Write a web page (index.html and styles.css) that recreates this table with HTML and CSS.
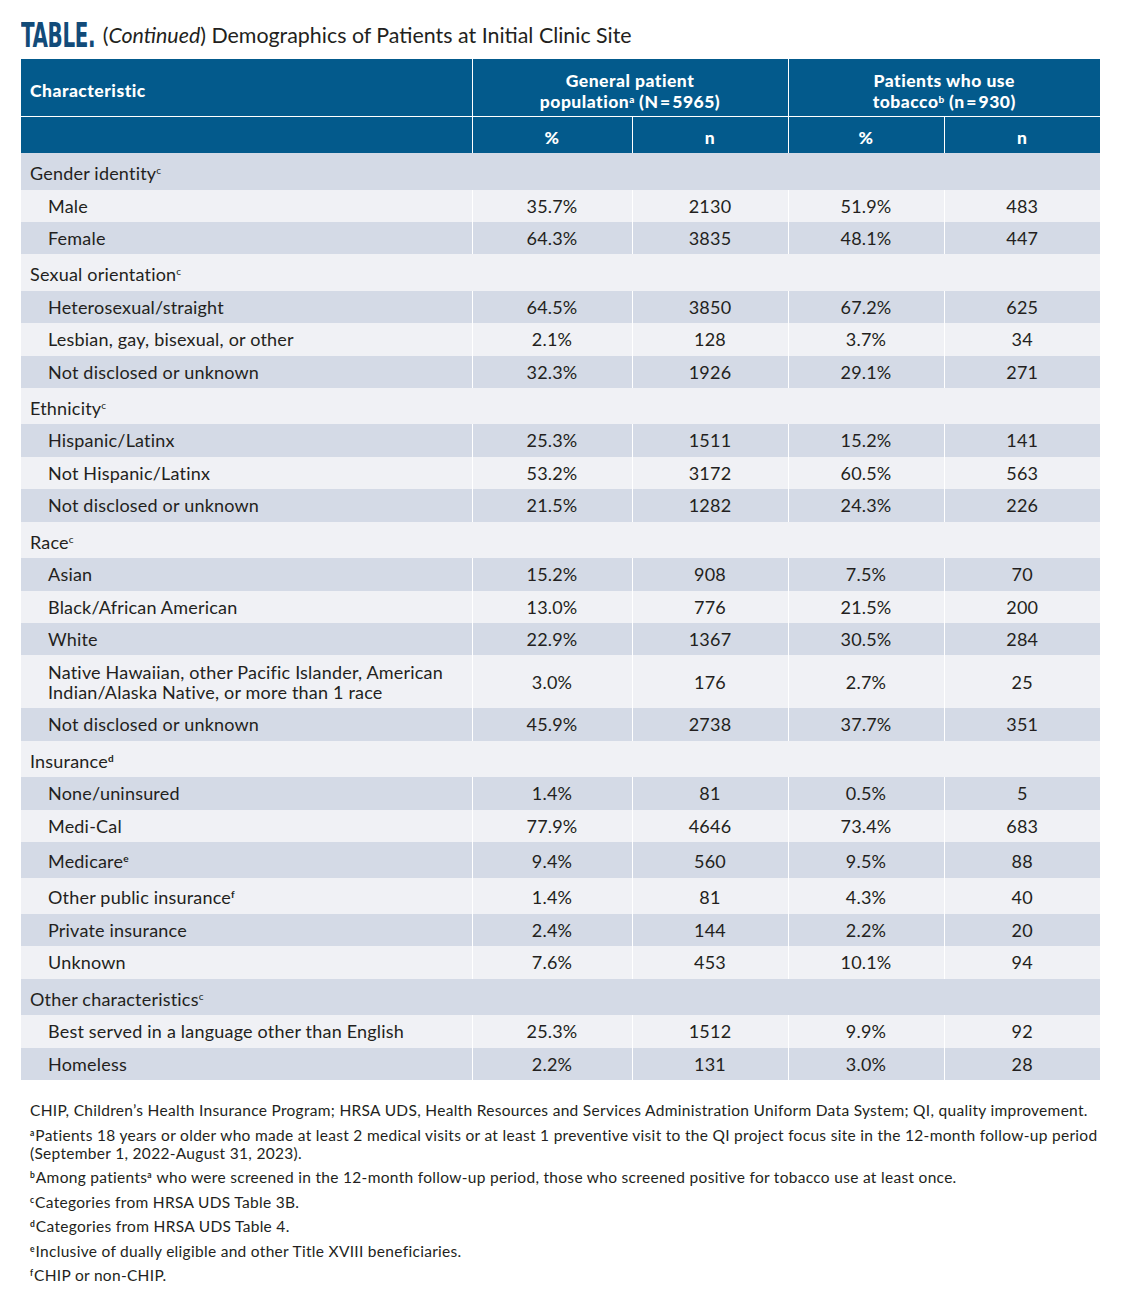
FILE: index.html
```html
<!DOCTYPE html>
<html lang="en">
<head>
<meta charset="utf-8">
<title>Demographics of Patients at Initial Clinic Site</title>
<link rel="stylesheet" href="styles.css">
</head>
<body>
<div class="page">
  <h1 class="title"><span class="tlabel">TABLE.</span> (<i>Continued</i>) Demographics of Patients at Initial Clinic Site</h1>
  <table class="demo">
    <colgroup>
      <col class="c-char"><col class="c-a"><col class="c-b"><col class="c-b"><col class="c-b">
    </colgroup>
    <thead>
      <tr class="h1">
        <th class="left">Characteristic</th>
        <th colspan="2">General patient<br>population<sup>a</sup> (N&#8202;=&#8202;5965)</th>
        <th colspan="2">Patients who use<br>tobacco<sup>b</sup> (n&#8202;=&#8202;930)</th>
      </tr>
      <tr class="h2">
        <th></th><th>%</th><th>n</th><th>%</th><th>n</th>
      </tr>
    </thead>
    <tbody>
      <tr class="cat"><td colspan="5">Gender identity<sup>c</sup></td></tr>
      <tr><td>Male</td><td>35.7%</td><td>2130</td><td>51.9%</td><td>483</td></tr>
      <tr><td>Female</td><td>64.3%</td><td>3835</td><td>48.1%</td><td>447</td></tr>
      <tr class="cat"><td colspan="5">Sexual orientation<sup>c</sup></td></tr>
      <tr><td>Heterosexual/straight</td><td>64.5%</td><td>3850</td><td>67.2%</td><td>625</td></tr>
      <tr><td>Lesbian, gay, bisexual, or other</td><td>2.1%</td><td>128</td><td>3.7%</td><td>34</td></tr>
      <tr><td>Not disclosed or unknown</td><td>32.3%</td><td>1926</td><td>29.1%</td><td>271</td></tr>
      <tr class="cat"><td colspan="5">Ethnicity<sup>c</sup></td></tr>
      <tr><td>Hispanic/Latinx</td><td>25.3%</td><td>1511</td><td>15.2%</td><td>141</td></tr>
      <tr><td>Not Hispanic/Latinx</td><td>53.2%</td><td>3172</td><td>60.5%</td><td>563</td></tr>
      <tr><td>Not disclosed or unknown</td><td>21.5%</td><td>1282</td><td>24.3%</td><td>226</td></tr>
      <tr class="cat"><td colspan="5">Race<sup>c</sup></td></tr>
      <tr><td>Asian</td><td>15.2%</td><td>908</td><td>7.5%</td><td>70</td></tr>
      <tr><td>Black/African American</td><td>13.0%</td><td>776</td><td>21.5%</td><td>200</td></tr>
      <tr><td>White</td><td>22.9%</td><td>1367</td><td>30.5%</td><td>284</td></tr>
      <tr class="two"><td>Native Hawaiian, other Pacific Islander, American<br>Indian/Alaska Native, or more than 1 race</td><td>3.0%</td><td>176</td><td>2.7%</td><td>25</td></tr>
      <tr><td>Not disclosed or unknown</td><td>45.9%</td><td>2738</td><td>37.7%</td><td>351</td></tr>
      <tr class="cat"><td colspan="5">Insurance<sup class="b">d</sup></td></tr>
      <tr><td>None/uninsured</td><td>1.4%</td><td>81</td><td>0.5%</td><td>5</td></tr>
      <tr><td>Medi-Cal</td><td>77.9%</td><td>4646</td><td>73.4%</td><td>683</td></tr>
      <tr class="tall"><td>Medicare<sup class="b">e</sup></td><td>9.4%</td><td>560</td><td>9.5%</td><td>88</td></tr>
      <tr class="tall"><td>Other public insurance<sup class="b">f</sup></td><td>1.4%</td><td>81</td><td>4.3%</td><td>40</td></tr>
      <tr><td>Private insurance</td><td>2.4%</td><td>144</td><td>2.2%</td><td>20</td></tr>
      <tr><td>Unknown</td><td>7.6%</td><td>453</td><td>10.1%</td><td>94</td></tr>
      <tr class="cat"><td colspan="5">Other characteristics<sup>c</sup></td></tr>
      <tr><td>Best served in a language other than English</td><td>25.3%</td><td>1512</td><td>9.9%</td><td>92</td></tr>
      <tr><td>Homeless</td><td>2.2%</td><td>131</td><td>3.0%</td><td>28</td></tr>
    </tbody>
  </table>
  <div class="notes">
    <p>CHIP, Children’s Health Insurance Program; HRSA UDS, Health Resources and Services Administration Uniform Data System; QI, quality improvement.</p>
    <p><sup>a</sup>Patients 18 years or older who made at least 2 medical visits or at least 1 preventive visit to the QI project focus site in the 12-month follow-up period (September 1, 2022-August 31, 2023).</p>
    <p><sup>b</sup>Among patients<sup>a</sup> who were screened in the 12-month follow-up period, those who screened positive for tobacco use at least once.</p>
    <p><sup>c</sup>Categories from HRSA UDS Table 3B.</p>
    <p><sup>d</sup>Categories from HRSA UDS Table 4.</p>
    <p><sup>e</sup>Inclusive of dually eligible and other Title XVIII beneficiaries.</p>
    <p><sup>f</sup>CHIP or non-CHIP.</p>
  </div>
</div>
</body>
</html>
```
FILE: styles.css
```css
html, body {
  margin: 0;
  padding: 0;
  background: #ffffff;
}
body {
  font-family: "Lato", "Noto Sans", "DejaVu Sans", sans-serif;
  color: #231f20;
}
.page {
  width: 1079px;
  padding: 15px 0 0 21px;
}
.title {
  margin: 0;
  height: 44px;
  font-size: 21.4px;
  font-weight: 400;
  line-height: 40px;
  color: #231f20;
  white-space: nowrap;
}
.title i {
  font-style: italic;
}
.tlabel {
  display: inline-block;
  line-height: 40px;
  vertical-align: top;
  font-family: "Liberation Sans Narrow", "DejaVu Sans Condensed", "Liberation Sans", sans-serif;
  font-weight: 700;
  font-size: 34px;
  color: #124b79;
  transform: scaleX(0.65);
  transform-origin: left center;
  margin-right: -38px;
  letter-spacing: -0.5px;
}
.demo {
  width: 1079px;
  border-collapse: collapse;
  table-layout: fixed;
}
.c-char { width: 451px; }
.c-a { width: 160px; }
.c-b { width: 156px; }
.demo th {
  background: #035a8c;
  color: #ffffff;
  font-weight: 900;
  font-size: 17.5px;
  letter-spacing: 0.5px;
  line-height: 21px;
  text-align: center;
  padding: 0 8px;
  border-left: 1px solid #ffffff;
}
.demo th.left,
.h2 th:first-child {
  text-align: left;
  padding-left: 9px;
  border-left: none;
}
.h1 th {
  height: 51px;
  padding-top: 6px;
  padding-bottom: 0;
  border-bottom: 1px solid #ffffff;
}
.h2 th {
  height: 31px;
  padding-top: 5px;
  padding-bottom: 0;
}
.demo th sup {
  font-size: 10px;
  letter-spacing: 0;
  vertical-align: 5px;
  line-height: 0;
}
.demo td {
  font-size: 18px;
  letter-spacing: 0.2px;
  line-height: 20px;
  padding: 6px 8px 6.4px;
  text-align: center;
  border-left: 1px solid #ffffff;
}
.demo td:first-child {
  text-align: left;
  padding-left: 27px;
  border-left: none;
}
.demo tbody tr:nth-child(odd) { background: #d4dae6; }
.demo tbody tr:nth-child(even) { background: #f0f1f5; }
.demo tr.cat td {
  padding-left: 9px;
  padding-top: 10px;
  padding-bottom: 6.5px;
}
.demo tr.tall td {
  padding-top: 9px;
  padding-bottom: 7px;
}
.demo td sup {
  font-size: 10px;
  line-height: 0;
  letter-spacing: 0;
  vertical-align: 6px;
}
.demo td sup.b {
  font-weight: 700;
}
.demo tr.two td {
  line-height: 20px;
  padding-top: 6.5px;
  padding-bottom: 6.5px;
}
.notes {
  margin-top: 21px;
  padding-left: 9px;
  font-size: 15.5px;
  letter-spacing: 0.3px;
  line-height: 18px;
}
.notes p {
  margin: 0 0 6.5px 0;
}
.notes sup {
  font-size: 8.5px;
  line-height: 0;
  letter-spacing: 0;
  vertical-align: 5px;
  font-weight: 700;
  margin-right: 1px;
}
```
